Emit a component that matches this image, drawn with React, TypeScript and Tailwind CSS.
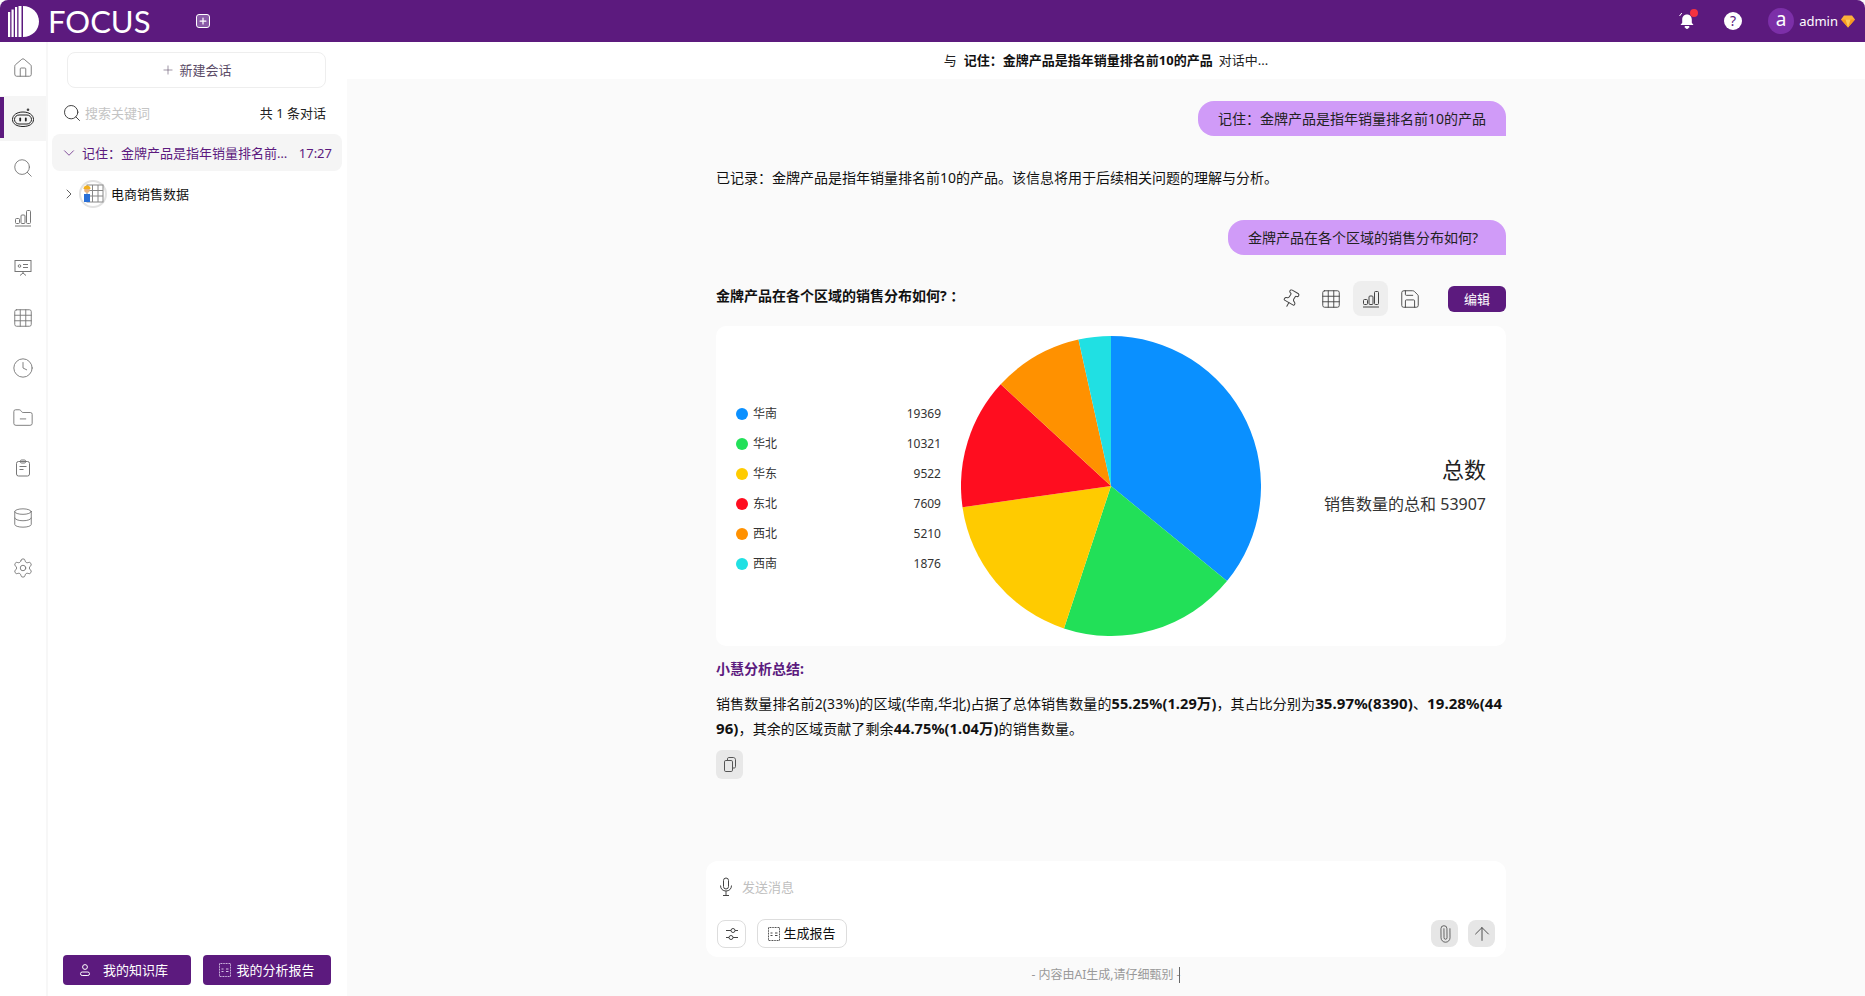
import type { ReactNode } from "react";
import { ArrowUp, ChevronDown, ChevronRight, Clock, Database, FolderMinus, Grid3x3, House, Paperclip, Pin, Plus, Save, Search, Settings } from "lucide-react";

const legend = [
  { name: "华南", value: 19369, color: "#0a90ff" },
  { name: "华北", value: 10321, color: "#22e058" },
  { name: "华东", value: 9522, color: "#ffcb00" },
  { name: "东北", value: 7609, color: "#ff0d1f" },
  { name: "西北", value: 5210, color: "#ff9100" },
  { name: "西南", value: 1876, color: "#20e0e3" },
];

function Bars({ size = 18 }: { size?: number }) {
  return (
    <svg width={size} height={size} viewBox="0 0 18 18" fill="none" stroke="currentColor" strokeWidth="1">
      <rect x="1.5" y="9.5" width="4" height="5" rx="1" />
      <rect x="7" y="6" width="4" height="8.5" rx="1" />
      <rect x="12.5" y="1.5" width="4" height="13" rx="1" />
      <path d="M1 17h16" />
    </svg>
  );
}

function Slides() {
  return (
    <svg width="18" height="18" viewBox="0 0 18 18" fill="none" stroke="currentColor" strokeWidth="1">
      <rect x="1" y="1.5" width="16" height="11" />
      <circle cx="5.5" cy="7" r="1.3" />
      <path d="M9 5.500h5M9 8.500h5M9 12.500v1.500M9 14l-3 2.500M9 14l3 2.500" />
    </svg>
  );
}

function Clipboard() {
  return (
    <svg width="18" height="18" viewBox="0 0 18 18" fill="none" stroke="currentColor" strokeWidth="1">
      <rect x="2.5" y="2.5" width="13" height="14.5" rx="2" />
      <rect x="6.5" y="1" width="5" height="3" rx="1" />
      <path d="M5.500 7.500h7M5.500 10.500h4" />
    </svg>
  );
}

function Robot() {
  return (
    <svg width="24" height="20" viewBox="0 0 24 20" fill="none" stroke="#222" strokeWidth="1">
      <circle cx="17" cy="1.700" r="1.300" fill="#444" stroke="none" />
      <path d="M1.500 11.500C1.500 7 6 4 12 4s10.500 3 10.500 7.500c0 4.500-4.500 7-10.500 7s-10.500-2.500-10.500-7z" />
      <rect x="3.500" y="7" width="17" height="9" rx="4.500" />
      <rect x="8.300" y="9.500" width="1.800" height="4" rx=".9" fill="#222" stroke="none" />
      <rect x="13.900" y="9.500" width="1.800" height="4" rx=".9" fill="#222" stroke="none" />
    </svg>
  );
}

function ReportIcon({ color }: { color: string }) {
  return (
    <svg width="12" height="14" viewBox="0 0 12 14" fill="none" stroke={color} strokeWidth="1">
      <rect x=".5" y=".5" width="11" height="13" strokeDasharray="1 .6" />
      <path d="M2.500 6h2M7 6h2.500M2.500 8.500h2M7 8.500h2.500" />
    </svg>
  );
}

function Logo() {
  return (
    <svg width="31" height="31" viewBox="0 0 31 31" fill="#fff">
      <rect x="0" y="6" width="2.200" height="25" />
      <rect x="3.500" y="3.500" width="2.200" height="27.500" />
      <rect x="7" y="1" width="2.200" height="30" />
      <rect x="10.500" y="0" width="3" height="31" />
      <path d="M15 0c9 0 16 7 16 15.500S24 31 15 31z" />
    </svg>
  );
}

function CopyIcon() {
  return (
    <svg width="12" height="15" viewBox="0 0 12 15" fill="none" stroke="currentColor" strokeWidth="1">
      <path d="M3.500 3.500V1.800c0-.7.500-1.300 1.200-1.300h4.600c1.200 0 2.200 1 2.200 2.200v7c0 .7-.5 1.300-1.200 1.300H8.500" />
      <rect x=".5" y="3.500" width="8" height="11" rx="1.300" />
    </svg>
  );
}

function Pie() {
  const total = legend.reduce((sum, d) => sum + d.value, 0);
  let angle = 0;
  return (
    <svg width="300" height="300" viewBox="-150 -150 300 300">
      {legend.map((d) => {
        const start = angle;
        angle += (d.value / total) * Math.PI * 2;
        const large = angle - start > Math.PI ? 1 : 0;
        const p = `M0 0L${150 * Math.sin(start)} ${-150 * Math.cos(start)}A150 150 0 ${large} 1 ${150 * Math.sin(angle)} ${-150 * Math.cos(angle)}Z`;
        return <path key={d.name} d={p} fill={d.color} />;
      })}
    </svg>
  );
}

function Header() {
  return (
    <header className="flex h-[42px] shrink-0 items-center rounded-t-[8px] bg-[#5c1a7e] text-white">
      <div className="ml-2 mt-[1px] shrink-0"><Logo /></div>
      <span className="ml-[9px] w-[100px] font-['Lato',sans-serif] text-[31px] leading-none">FOCUS</span>
      <div className="ml-[48px] flex h-[14px] w-[14px] items-center justify-center rounded-[3px] border border-white bg-[#8a5aa8]">
        <Plus size={10} strokeWidth={3} />
      </div>
      <div className="ml-auto flex items-center pr-[10px]">
        <div className="relative">
          <svg width="18" height="18" viewBox="0 0 18 18" fill="#fff">
            <path d="M9 2.500c3 0 4.800 2.200 4.800 5v3.200l1.700 2.300H2.500l1.700-2.300V7.500c0-2.800 1.800-5 4.800-5z" />
            <path d="M7 14.500h4c0 1.200-.9 2-2 2s-2-.8-2-2zM3.800 1 1.500 4M14.200 1l2.300 3" stroke="#fff" />
          </svg>
          <span className="absolute -right-[2px] -top-[3px] h-[8px] w-[8px] rounded-full bg-[#f5333f]" />
        </div>
        <div className="ml-[28px] flex h-[18px] w-[18px] items-center justify-center rounded-full bg-white text-[14px] leading-none text-[#5c1a7e]">?</div>
        <div className="ml-[26px] flex h-[26px] w-[26px] items-center justify-center rounded-full bg-[#7c2fa8] pb-[3px] text-[19px] leading-none">a</div>
        <span className="ml-[5px] text-[13px] leading-none">admin</span>
        <svg className="ml-[3px]" width="14" height="13" viewBox="0 0 14 13">
          <path d="M3 .5h8l3 4-7 8-7-8z" fill="#fbb03b" />
          <path d="M0 4.500h14L7 12.500z" fill="#f79a1f" />
          <path d="M4.500 4.500h5L7 12.500z" fill="#ffc85a" />
        </svg>
      </div>
    </header>
  );
}

function Rail() {
  const cls = "text-[#777]";
  const items = [
    <House size={22} strokeWidth={1} className={cls} />,
    <Robot />,
    <Search size={22} strokeWidth={1} className={cls} />,
    <span className={cls}><Bars /></span>,
    <span className={cls}><Slides /></span>,
    <Grid3x3 size={22} strokeWidth={1} className={cls} />,
    <Clock size={22} strokeWidth={1} className={cls} />,
    <FolderMinus size={22} strokeWidth={1} className={cls} />,
    <span className={cls}><Clipboard /></span>,
    <Database size={22} strokeWidth={1} className={cls} />,
    <Settings size={22} strokeWidth={1} className={cls} />,
  ];
  return (
    <nav className="relative z-10 flex w-[46px] shrink-0 flex-col bg-white pt-px shadow-[2px_0_0_#f7f7f7]">
      {items.map((icon, i) => (
        <div key={i} className="relative flex h-[50px] items-center">
          <div className={"flex h-[45px] w-full items-center justify-center " + (i === 1 ? "bg-[#f5f5f5]" : "")}>{icon}</div>
          {i === 1 && <span className="absolute left-0 top-[4px] h-[41px] w-[4px] bg-[#5c1a7e]" />}
        </div>
      ))}
    </nav>
  );
}

function Sidebar() {
  return (
    <aside className="flex w-[301px] shrink-0 flex-col bg-white pb-[11px] pt-[10px] text-[13px] leading-[18px]">
      <button className="mx-[21px] flex h-[36px] items-center justify-center rounded-lg border border-[#eeeeee] text-[#5a4a66]">
        <Plus size={14} strokeWidth={1} className="mr-[4px]" />新建会话
      </button>
      <div className="mt-[15px] flex items-center pl-[16px] pr-[21px]">
        <Search size={20} strokeWidth={1.2} className="text-[#444]" />
        <span className="ml-[3px] text-[#c4c4c4]">搜索关键词</span>
        <span className="ml-auto text-[#222]">共 1 条对话</span>
      </div>
      <div className="ml-[6px] mr-[5px] mt-[11px] flex h-[37px] items-center rounded-lg bg-[#f5f5f5] pl-[8px] pr-[10px] text-[#5c1a7e]">
        <ChevronDown size={18} strokeWidth={1} className="shrink-0" />
        <span className="ml-[4px] w-[212px] truncate">记住：金牌产品是指年销量排名前10的产品</span>
        <span className="ml-auto">17:27</span>
      </div>
      <div className="mt-[6px] flex h-[33px] items-center pl-[15px] text-[#111]">
        <ChevronRight size={16} strokeWidth={1} />
        <div className="ml-[2px] flex h-[28px] w-[28px] items-center justify-center rounded-full border-2 border-[#e2e2e2]">
          <svg width="22" height="20" viewBox="0 0 22 20">
            <rect x="5" y="1" width="16" height="17" fill="#fff" stroke="#888" />
            <path d="M10.500 1v17M16 1v17M5 6.500h16M5 12h16" stroke="#888" />
            <circle cx="5" cy="6" r="2.800" fill="#e8b27d" />
            <path d="M1.500 5a3.500 3.500 0 0 1 7 0z" fill="#f2b01e" />
            <path d="M2 10h6v8H2z" fill="#2a6fd6" />
          </svg>
        </div>
        <span className="ml-[4px]">电商销售数据</span>
      </div>
      <div className="ml-[17px] mt-auto flex gap-[12px] text-white">
        <button className="flex h-[30px] w-[128px] items-center justify-center rounded-[4px] bg-[#5c1a7e] pr-[7px]">
          <svg width="12" height="12" viewBox="0 0 12 12" fill="none" stroke="#fff" className="mr-[12px]">
            <circle cx="6" cy="3" r="2.400" />
            <rect x="1.500" y="8" width="9" height="3.500" rx="1.700" />
          </svg>
          我的知识库
        </button>
        <button className="flex h-[30px] w-[128px] items-center justify-center rounded-[4px] bg-[#5c1a7e]">
          <span className="mr-[5px] flex"><ReportIcon color="#d6c3e6" /></span>我的分析报告
        </button>
      </div>
    </aside>
  );
}

function UserBubble({ children }: { children: ReactNode }) {
  return (
    <div className="flex justify-end">
      <div className="flex h-[35px] items-center rounded-t-[16px] rounded-bl-[16px] bg-[#d09bf8] px-[20px] text-[#222]">{children}</div>
    </div>
  );
}

function ChatBody() {
  return (
    <div className="flex flex-col pl-[10px] pt-[22px] text-[14px] leading-[20px] text-[#111]">
      <UserBubble>记住：金牌产品是指年销量排名前10的产品</UserBubble>
      <p className="mt-[32px]">已记录：金牌产品是指年销量排名前10的产品。该信息将用于后续相关问题的理解与分析。</p>
      <div className="mt-[32px]"><UserBubble><span className="mr-[8px]">金牌产品在各个区域的销售分布如何?</span></UserBubble></div>
      <div className="mt-[26px] flex h-[35px] items-center text-[#111]">
        <span className="-mt-[6px] font-bold">金牌产品在各个区域的销售分布如何? ：</span>
        <div className="ml-auto flex items-center text-[#444]">
          <Pin size={20} strokeWidth={1.2} className="rotate-[30deg]" />
          <Grid3x3 size={22} strokeWidth={1} className="ml-[19px]" />
          <div className="ml-[11px] flex h-[35px] w-[35px] items-center justify-center rounded-lg bg-[#eeeeee]"><Bars /></div>
          <Save size={22} strokeWidth={1} className="ml-[11px]" />
          <button className="ml-[27px] flex h-[26px] w-[58px] items-center justify-center rounded-[6px] bg-[#5c1a7e] text-[13px] text-white">编辑</button>
        </div>
      </div>
      <div className="mt-[10px] flex h-[320px] items-center rounded-[10px] bg-white pr-[20px]">
        <div className="ml-[20px] mt-[5px] w-[205px] text-[12px] leading-[30px] text-[#333]">
          {legend.map((d) => (
            <div key={d.name} className="flex items-center">
              <span className="h-[12px] w-[12px] rounded-full" style={{ background: d.color }} />
              <span className="ml-[5px]">{d.name}</span>
              <span className="ml-auto">{d.value}</span>
            </div>
          ))}
        </div>
        <div className="ml-[20px]"><Pie /></div>
        <div className="ml-auto pb-[2.5px] text-right">
          <div className="text-[22px] leading-[30px] text-[#222]">总数</div>
          <div className="mt-[8px] text-[16px] leading-[24px] text-[#333]">销售数量的总和 53907</div>
        </div>
      </div>
      <div className="mt-[13px] font-bold leading-[20px] text-[#5c1a7e]">小慧分析总结:</div>
      <p className="mt-[12px] break-all leading-[25px] tracking-[0.1px] text-[#111]">
        销售数量排名前2(33%)的区域(华南,华北)占据了总体销售数量的<b className="text-[14.5px]">55.25%(1.29万)</b>，其占比分别为<b className="text-[15px]">35.97%(8390)</b>、<b className="text-[15px]">19.28%(4496)</b>，其余的区域贡献了剩余<b className="text-[14.5px]">44.75%(1.04万)</b>的销售数量。
      </p>
      <div className="mt-[9px] flex h-[29px] w-[27px] items-center justify-center rounded-[6px] bg-[#e8e8e8] text-[#555]">
        <CopyIcon />
      </div>
    </div>
  );
}

function Composer() {
  return (
    <div className="mt-auto">
      <div className="flex h-[96px] flex-col rounded-[12px] bg-white px-[11px] pb-[9px] pt-[16px]">
        <div className="flex items-center pl-[1px] text-[13px] leading-[20px] text-[#c0c0c0]">
          <svg width="16" height="20" viewBox="0 0 16 20" fill="none" stroke="#444" strokeWidth="1">
            <rect x="5.500" y="1" width="5" height="11" rx="2.500" />
            <path d="M2.500 8.500c0 3.500 2.300 5.500 5.500 5.500s5.500-2 5.500-5.500M8 14v4.500M5 18.500h6" />
          </svg>
          <span className="ml-[8px]">发送消息</span>
        </div>
        <div className="mt-auto flex items-center">
          <button className="flex h-[28px] w-[29px] items-center justify-center rounded-lg border border-[#dddddd]">
            <svg width="14" height="14" viewBox="0 0 14 14" fill="none" stroke="#444">
              <circle cx="8" cy="3.500" r="2" />
              <circle cx="6" cy="10.500" r="2" />
              <path d="M1 3.500h5M10 3.500h3M1 10.500h3M8 10.500h5" />
            </svg>
          </button>
          <button className="ml-[11px] flex h-[29px] w-[90px] items-center justify-center rounded-lg border border-[#dddddd] text-[13px] text-[#111]">
            <span className="mr-[3px] flex"><ReportIcon color="#444" /></span>生成报告
          </button>
          <button className="ml-auto flex h-[27px] w-[27px] items-center justify-center rounded-lg bg-[#e6e6e6] text-[#444]">
            <Paperclip size={18} strokeWidth={1} className="rotate-[-45deg]" />
          </button>
          <button className="ml-[10px] flex h-[27px] w-[27px] items-center justify-center rounded-lg bg-[#e6e6e6] text-[#444]">
            <ArrowUp size={22} strokeWidth={1} />
          </button>
        </div>
      </div>
      <div className="flex h-[39px] items-center justify-center pb-[4px] text-[12px] text-[#999]">
        - 内容由AI生成,请仔细甄别 -<span className="-ml-[1px] inline-block h-[16px] w-px bg-[#666]" />
      </div>
    </div>
  );
}

export default function App() {
  return (
    <div className="flex h-screen w-full flex-col overflow-hidden bg-[#fafafa] font-['Noto_Sans','Noto_Sans_CJK_SC',sans-serif]">
      <Header />
      <div className="flex min-h-0 flex-1">
        <Rail />
        <Sidebar />
        <main className="flex min-w-0 flex-1 flex-col">
          <div className="flex h-[37px] shrink-0 items-center justify-center bg-white text-[13px] text-[#222]">
            与<b className="ml-[7px] text-[#111]">记住：金牌产品是指年销量排名前10的产品</b><span className="ml-[6px]">对话中...</span>
          </div>
          <div className="mx-auto flex min-h-0 w-[800px] flex-1 flex-col">
            <ChatBody />
            <Composer />
          </div>
        </main>
      </div>
    </div>
  );
}
